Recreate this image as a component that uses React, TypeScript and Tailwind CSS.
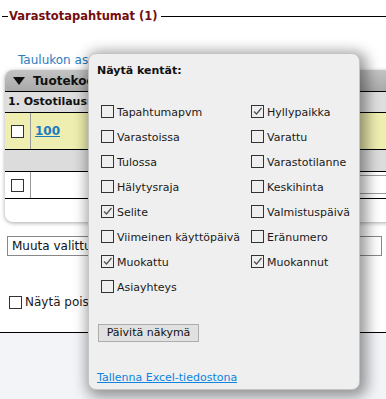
import React from "react";

const FONT = "font-['DejaVu_Sans','Verdana',sans-serif]";

const leftFields: [string, boolean][] = [
  ["Tapahtumapvm", false],
  ["Varastoissa", false],
  ["Tulossa", false],
  ["Hälytysraja", false],
  ["Selite", true],
  ["Viimeinen käyttöpäivä", false],
  ["Muokattu", true],
  ["Asiayhteys", false],
];

const rightFields: [string, boolean][] = [
  ["Hyllypaikka", true],
  ["Varattu", false],
  ["Varastotilanne", false],
  ["Keskihinta", false],
  ["Valmistuspäivä", false],
  ["Eränumero", false],
  ["Muokannut", true],
];

function Box({ checked, white }: { checked?: boolean; white?: boolean }) {
  return (
    <span
      className={`relative inline-block h-[13px] w-[13px] shrink-0 border border-[#333] ${white ? "bg-white" : ""}`}
    >
      {checked && (
        <svg viewBox="0 0 13 13" className="absolute left-[-1px] top-[-1px] h-[13px] w-[13px]">
          <path d="M3 6.5 L5.5 9 L10.5 3" fill="none" stroke="#555" strokeWidth="1.3" />
        </svg>
      )}
    </span>
  );
}

function Field({ label, checked }: { label: string; checked: boolean }) {
  return (
    <div className="flex h-[25px] items-start gap-[3px]">
      <Box checked={checked} />
      <span className="mt-[1px] text-[11px] leading-[13px] text-[#1a1a1a]">{label}</span>
    </div>
  );
}

export default function App() {
  return (
    <div className={`relative h-[399px] w-[386px] overflow-hidden bg-[#f2f4f7] ${FONT}`}>
      <div className="flex h-[333px] flex-col border-b border-black bg-white">
        {/* legend */}
        <div className="flex h-[33px] items-center">
          <span className="ml-[2px] h-px w-[6px] bg-black" />
          <span className="px-[1px] text-[11.5px] font-bold text-[#730d0d]">Varastotapahtumat (1)</span>
          <span className="ml-[2px] h-px flex-1 bg-black" />
        </div>

        <div className="ml-[18px] mt-[20px] text-[12px] leading-[15px] text-[#2a7dc0]">
          Taulukon asetukset
        </div>

        {/* table */}
        <div className="ml-[5px] mt-[2px] w-[420px] overflow-hidden rounded-l-[8px] bg-white shadow-[0_1px_4px_rgba(0,0,0,0.35)]">
          <div className="flex h-[22px] items-center border-b border-black bg-gradient-to-b from-[#c4c4c4] to-[#a9a9a9]">
            <svg viewBox="0 0 12 8" className="ml-[8px] h-[8px] w-[12px]">
              <path d="M0 0 H12 L6 8 Z" fill="#111" />
            </svg>
            <span className="ml-[8px] text-[12px] font-bold text-[#111]">Tuotekoodi</span>
          </div>
          <div className="flex h-[21px] items-center border-b border-black bg-[#dedede]">
            <span className="ml-[3px] text-[11px] font-bold text-[#111]">1. Ostotilausrivit</span>
          </div>
          <div className="flex h-[37px] border-b border-black bg-[#eeeeb0]">
            <div className="flex w-[26px] items-center justify-center border-r border-[#999]">
              <Box white />
            </div>
            <div className="flex items-center pl-[4px] text-[12px] font-bold text-[#1a7bc0] underline">100</div>
          </div>
          <div className="h-[22px] border-b border-black bg-[#dcdcdc]" />
          <div className="flex h-[27px] border-b border-black">
            <div className="flex w-[26px] items-center justify-center border-r border-[#999]">
              <Box white />
            </div>
            <div className="ml-auto mt-[3px] h-[19px] w-[120px] border border-[#999]" />
          </div>
          <div className="h-[23px]" />
        </div>

        <div className="ml-[7px] mt-[14px] flex h-[20px] w-[375px] items-center border border-[#888] bg-white pl-[4px] text-[12px] text-[#111]">
          Muuta valittuja
        </div>

        <div className="ml-[9px] mt-[37px] flex items-center gap-[3px]">
          <Box white />
          <span className="text-[12px] text-[#1a1a1a]">Näytä poistetut</span>
        </div>
      </div>

      {/* popup */}
      <div className="absolute left-[88px] top-[53px] h-[337px] w-[272px] rounded-[8px] border border-[#c4c4c4] bg-[#efefef] shadow-[3px_3px_14px_4px_rgba(0,0,0,0.4)]">
        <div className="ml-[8px] mt-[10px] text-[11px] font-bold leading-[13px] text-[#111]">Näytä kentät:</div>
        <div className="ml-[12px] mt-[28px] grid grid-cols-[150px_1fr]">
          <div className="flex flex-col">
            {leftFields.map(([l, c]) => (
              <Field key={l} label={l} checked={c} />
            ))}
          </div>
          <div className="flex flex-col">
            {rightFields.map(([l, c]) => (
              <Field key={l} label={l} checked={c} />
            ))}
          </div>
        </div>
        <button className="ml-[9px] mt-[19px] h-[18px] w-[101px] border border-[#adadad] bg-[#e1e1e1] text-[11px] leading-[16px] text-[#111]">
          Päivitä näkymä
        </button>
        <div className="ml-[8px] mt-[28px] text-[11px] leading-[13px] text-[#0c84e0] underline">
          Tallenna Excel-tiedostona
        </div>
      </div>
    </div>
  );
}
